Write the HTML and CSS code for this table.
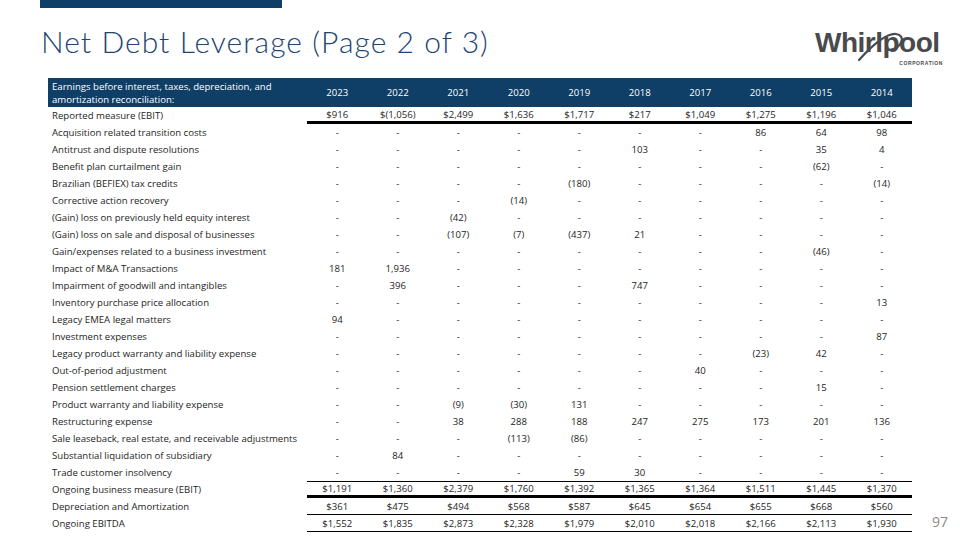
FILE: index.html
```html
<!DOCTYPE html>
<html>
<head>
<meta charset="utf-8">
<link rel="stylesheet" href="styles.css">
</head>
<body>
<div class="topbar"></div>
<div class="head">
  <h1 class="title">Net Debt Leverage (Page 2 of 3)</h1>
  <div class="logo">
    <div class="logo-word">Whirlpool</div>
    <svg class="swoosh" width="130" height="40" viewBox="0 0 130 40">
      <path d="M44 31 C 54 20, 70 4, 81 5 C 91 6, 88 19, 74 21" fill="none" stroke="#4a4a4c" stroke-width="2.2" stroke-linecap="round"/>
    </svg>
    <div class="logo-corp">CORPORATION</div>
  </div>
</div>
<div class="main">
  <div class="tbl">
    <div class="row hdr"><div class="lbl">Earnings before interest, taxes, depreciation, and<br>amortization reconciliation:</div><div>2023</div><div>2022</div><div>2021</div><div>2020</div><div>2019</div><div>2018</div><div>2017</div><div>2016</div><div>2015</div><div>2014</div></div>
    <div class="row rep"><div class="lbl">Reported measure (EBIT)</div><div class="n">$916</div><div class="n">$(1,056)</div><div class="n">$2,499</div><div class="n">$1,636</div><div class="n">$1,717</div><div class="n">$217</div><div class="n">$1,049</div><div class="n">$1,275</div><div class="n">$1,196</div><div class="n">$1,046</div></div>
    <div class="row"><div class="lbl">Acquisition related transition costs</div><div>-</div><div>-</div><div>-</div><div>-</div><div>-</div><div>-</div><div>-</div><div>86</div><div>64</div><div>98</div></div>
    <div class="row"><div class="lbl">Antitrust and dispute resolutions</div><div>-</div><div>-</div><div>-</div><div>-</div><div>-</div><div>103</div><div>-</div><div>-</div><div>35</div><div>4</div></div>
    <div class="row"><div class="lbl">Benefit plan curtailment gain</div><div>-</div><div>-</div><div>-</div><div>-</div><div>-</div><div>-</div><div>-</div><div>-</div><div>(62)</div><div>-</div></div>
    <div class="row"><div class="lbl">Brazilian (BEFIEX) tax credits</div><div>-</div><div>-</div><div>-</div><div>-</div><div>(180)</div><div>-</div><div>-</div><div>-</div><div>-</div><div>(14)</div></div>
    <div class="row"><div class="lbl">Corrective action recovery</div><div>-</div><div>-</div><div>-</div><div>(14)</div><div>-</div><div>-</div><div>-</div><div>-</div><div>-</div><div>-</div></div>
    <div class="row"><div class="lbl">(Gain) loss on previously held equity interest</div><div>-</div><div>-</div><div>(42)</div><div>-</div><div>-</div><div>-</div><div>-</div><div>-</div><div>-</div><div>-</div></div>
    <div class="row"><div class="lbl">(Gain) loss on sale and disposal of businesses</div><div>-</div><div>-</div><div>(107)</div><div>(7)</div><div>(437)</div><div>21</div><div>-</div><div>-</div><div>-</div><div>-</div></div>
    <div class="row"><div class="lbl">Gain/expenses related to a business investment</div><div>-</div><div>-</div><div>-</div><div>-</div><div>-</div><div>-</div><div>-</div><div>-</div><div>(46)</div><div>-</div></div>
    <div class="row"><div class="lbl">Impact of M&amp;A Transactions</div><div>181</div><div>1,936</div><div>-</div><div>-</div><div>-</div><div>-</div><div>-</div><div>-</div><div>-</div><div>-</div></div>
    <div class="row"><div class="lbl">Impairment of goodwill and intangibles</div><div>-</div><div>396</div><div>-</div><div>-</div><div>-</div><div>747</div><div>-</div><div>-</div><div>-</div><div>-</div></div>
    <div class="row"><div class="lbl">Inventory purchase price allocation</div><div>-</div><div>-</div><div>-</div><div>-</div><div>-</div><div>-</div><div>-</div><div>-</div><div>-</div><div>13</div></div>
    <div class="row"><div class="lbl">Legacy EMEA legal matters</div><div>94</div><div>-</div><div>-</div><div>-</div><div>-</div><div>-</div><div>-</div><div>-</div><div>-</div><div>-</div></div>
    <div class="row"><div class="lbl">Investment expenses</div><div>-</div><div>-</div><div>-</div><div>-</div><div>-</div><div>-</div><div>-</div><div>-</div><div>-</div><div>87</div></div>
    <div class="row"><div class="lbl">Legacy product warranty and liability expense</div><div>-</div><div>-</div><div>-</div><div>-</div><div>-</div><div>-</div><div>-</div><div>(23)</div><div>42</div><div>-</div></div>
    <div class="row"><div class="lbl">Out-of-period adjustment</div><div>-</div><div>-</div><div>-</div><div>-</div><div>-</div><div>-</div><div>40</div><div>-</div><div>-</div><div>-</div></div>
    <div class="row"><div class="lbl">Pension settlement charges</div><div>-</div><div>-</div><div>-</div><div>-</div><div>-</div><div>-</div><div>-</div><div>-</div><div>15</div><div>-</div></div>
    <div class="row"><div class="lbl">Product warranty and liability expense</div><div>-</div><div>-</div><div>(9)</div><div>(30)</div><div>131</div><div>-</div><div>-</div><div>-</div><div>-</div><div>-</div></div>
    <div class="row"><div class="lbl">Restructuring expense</div><div>-</div><div>-</div><div>38</div><div>288</div><div>188</div><div>247</div><div>275</div><div>173</div><div>201</div><div>136</div></div>
    <div class="row"><div class="lbl">Sale leaseback, real estate, and receivable adjustments</div><div>-</div><div>-</div><div>-</div><div>(113)</div><div>(86)</div><div>-</div><div>-</div><div>-</div><div>-</div><div>-</div></div>
    <div class="row"><div class="lbl">Substantial liquidation of subsidiary</div><div>-</div><div>84</div><div>-</div><div>-</div><div>-</div><div>-</div><div>-</div><div>-</div><div>-</div><div>-</div></div>
    <div class="row"><div class="lbl">Trade customer insolvency</div><div>-</div><div>-</div><div>-</div><div>-</div><div>59</div><div>30</div><div>-</div><div>-</div><div>-</div><div>-</div></div>
    <div class="row ebit"><div class="lbl">Ongoing business measure (EBIT)</div><div class="n">$1,191</div><div class="n">$1,360</div><div class="n">$2,379</div><div class="n">$1,760</div><div class="n">$1,392</div><div class="n">$1,365</div><div class="n">$1,364</div><div class="n">$1,511</div><div class="n">$1,445</div><div class="n">$1,370</div></div>
    <div class="row da"><div class="lbl">Depreciation and Amortization</div><div class="n">$361</div><div class="n">$475</div><div class="n">$494</div><div class="n">$568</div><div class="n">$587</div><div class="n">$645</div><div class="n">$654</div><div class="n">$655</div><div class="n">$668</div><div class="n">$560</div></div>
    <div class="row da"><div class="lbl">Ongoing EBITDA</div><div class="n">$1,552</div><div class="n">$1,835</div><div class="n">$2,873</div><div class="n">$2,328</div><div class="n">$1,979</div><div class="n">$2,010</div><div class="n">$2,018</div><div class="n">$2,166</div><div class="n">$2,113</div><div class="n">$1,930</div></div>
  </div>
  <div class="pg">97</div>
</div>
</body>
</html>
```

FILE: styles.css
```css
body {
  margin: 0;
  width: 960px;
  height: 540px;
  overflow: hidden;
  background: #ffffff;
  font-family: "Open Sans", "Liberation Sans", sans-serif;
}

.topbar {
  margin-left: 40px;
  width: 242px;
  height: 8px;
  background: #0f3e66;
}

.head {
  display: flex;
  justify-content: space-between;
  align-items: flex-start;
  height: 70px;
  padding: 0 17px 0 41px;
}

.title {
  margin: 15px 0 0;
  font-family: Lato, "Open Sans", sans-serif;
  font-weight: 300;
  font-size: 30px;
  line-height: 36px;
  letter-spacing: 1.05px;
  color: #1c4571;
}

.logo {
  position: relative;
  margin-top: 21px;
  width: 128px;
  height: 40px;
}

.logo-word {
  font-family: "Liberation Sans", Arial, sans-serif;
  font-weight: 700;
  font-size: 28px;
  line-height: 27px;
  letter-spacing: -0.5px;
  color: #4a4a4c;
}

.swoosh {
  position: absolute;
  left: 0;
  top: 0;
}

.logo-corp {
  text-align: right;
  font-family: "Liberation Sans", Arial, sans-serif;
  font-weight: 700;
  font-size: 5px;
  letter-spacing: 0.6px;
  color: #4a4a4c;
  margin-top: 4px;
}

.main {
  display: flex;
  align-items: flex-end;
  margin-left: 48px;
}

.tbl {
  width: 864px;
  font-size: 9.6px;
  color: #1e1e1e;
}

.row {
  display: grid;
  grid-template-columns: 259px repeat(10, 1fr);
  height: 17px;
}

.row > div {
  display: flex;
  align-items: center;
  justify-content: center;
  box-sizing: border-box;
  white-space: nowrap;
}

.row > .lbl {
  justify-content: flex-start;
  padding-left: 4px;
}

.hdr {
  height: 29px;
  background: #0f3e66;
  color: #ffffff;
}

.hdr > .lbl {
  line-height: 13px;
}

.rep > .n {
  border-bottom: 3px solid #000;
}

.ebit > .n {
  border-top: 1px solid #000;
  border-bottom: 3px solid #000;
}

.da > .n {
  border-bottom: 1px solid #000;
}

.pg {
  margin-left: 20px;
  margin-bottom: 2px;
  font-size: 14px;
  line-height: 16px;
  color: #8a8a8a;
}
```
